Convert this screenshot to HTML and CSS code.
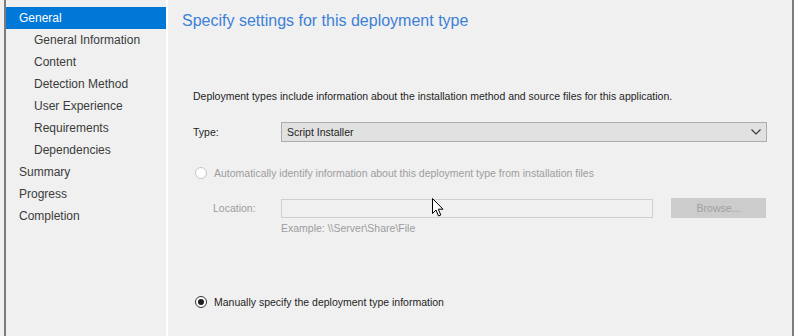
FILE: index.html
```html
<!DOCTYPE html>
<html lang="en">
<head>
    <meta charset="UTF-8">
    <title>Create Deployment Type Wizard</title>
    <link rel="stylesheet" href="styles.css">
</head>
<body>
    <div class="window">
        <ul class="steps">
            <li class="step selected">General</li>
            <li class="step sub">General Information</li>
            <li class="step sub">Content</li>
            <li class="step sub">Detection Method</li>
            <li class="step sub">User Experience</li>
            <li class="step sub">Requirements</li>
            <li class="step sub">Dependencies</li>
            <li class="step">Summary</li>
            <li class="step">Progress</li>
            <li class="step">Completion</li>
        </ul>

        <div class="page">
            <h1>Specify settings for this deployment type</h1>

            <div class="form">
                <p class="intro">Deployment types include information about the installation method and source files for this application.</p>

                <div class="row">
                    <label class="label">Type:</label>
                    <div class="select">
                        <span>Script Installer</span>
                        <svg width="10" height="6" viewBox="0 0 10 6"><path d="M0.5 0.5 L5 5 L9.5 0.5" fill="none" stroke="#333" stroke-width="1.1"/></svg>
                    </div>
                </div>

                <div class="radio disabled">
                    <span class="dot"></span>
                    <span>Automatically identify information about this deployment type from installation files</span>
                </div>

                <div class="row location">
                    <label class="label">Location:</label>
                    <div class="input"></div>
                    <div class="button">Browse...</div>
                </div>
                <div class="example">Example: \\Server\Share\File</div>

                <div class="radio checked">
                    <span class="dot"></span>
                    <span>Manually specify the deployment type information</span>
                </div>
            </div>

            <svg class="cursor" width="13" height="20" viewBox="0 0 13 20">
                <path d="M0.5 0.5 L0.5 15.5 L4 12 L6.5 18 L8.8 17 L6.3 11.2 L11 11.2 Z" fill="#fff" stroke="#000" stroke-width="1"/>
            </svg>
        </div>
    </div>
</body>
</html>
```

FILE: styles.css
```css
html, body {
    margin: 0;
    padding: 0;
    background-color: #f0f0f0;
}

body {
    font-family: "Liberation Sans", Arial, sans-serif;
    color: #1e1e1e;
}

.window {
    display: flex;
    height: 336px;
    margin-left: 4px;
    border-left: 2px solid #7c7c7c;
    border-right: 2px solid #7c7c7c;
    box-sizing: border-box;
}

.steps {
    width: 160px;
    margin: 0;
    padding: 7px 0 0 0;
    list-style: none;
    border-right: 2px solid #ffffff;
    font-size: 12px;
}

.step {
    height: 22px;
    line-height: 22px;
    padding-left: 13px;
    color: #3b3b3b;
}

.step.sub {
    padding-left: 28px;
}

.step.selected {
    background-color: #0078d7;
    color: #ffffff;
}

.page {
    position: relative;
    flex: 1;
    padding-left: 14px;
}

h1 {
    margin: 12px 0 0 0;
    font-size: 16px;
    font-weight: normal;
    color: #3c80d8;
}

.form {
    padding: 0 0 0 11px;
    margin-top: 59px;
    font-size: 10.5px;
}

.intro {
    margin: 0;
    height: 15px;
    line-height: 15px;
}

.row {
    display: flex;
    align-items: center;
    margin-top: 18px;
}

.label {
    width: 88px;
}

.select {
    display: flex;
    align-items: center;
    justify-content: space-between;
    width: 486px;
    height: 20px;
    padding: 0 5px 0 5px;
    box-sizing: border-box;
    background-color: #e1e1e1;
    border: 1px solid #adadad;
}

.radio {
    display: flex;
    align-items: center;
    margin-top: 25px;
    margin-left: 2px;
}

.dot {
    width: 12px;
    height: 12px;
    border-radius: 50%;
    border: 1px solid #333;
    background-color: #fff;
    margin-right: 7px;
    box-sizing: border-box;
    position: relative;
}

.radio.disabled {
    color: #9d9d9d;
}

.radio.disabled .dot {
    border-color: #c6c6c6;
}

.radio.checked .dot::after {
    content: "";
    position: absolute;
    left: 2px;
    top: 2px;
    width: 6px;
    height: 6px;
    border-radius: 50%;
    background-color: #1e1e1e;
}

.location {
    margin-top: 19px;
    color: #9d9d9d;
}

.location .label {
    padding-left: 20px;
    width: 68px;
}

.input {
    width: 372px;
    height: 19px;
    border: 1px solid #cfcfcf;
    box-sizing: border-box;
}

.button {
    width: 95px;
    height: 20px;
    line-height: 20px;
    margin-left: 18px;
    text-align: center;
    background-color: #cccccc;
    color: #a0a0a0;
}

.example {
    margin: 4px 0 0 88px;
    color: #9d9d9d;
}

.radio.checked {
    margin-top: 62px;
}

.cursor {
    position: absolute;
    left: 264px;
    top: 198px;
}
```
